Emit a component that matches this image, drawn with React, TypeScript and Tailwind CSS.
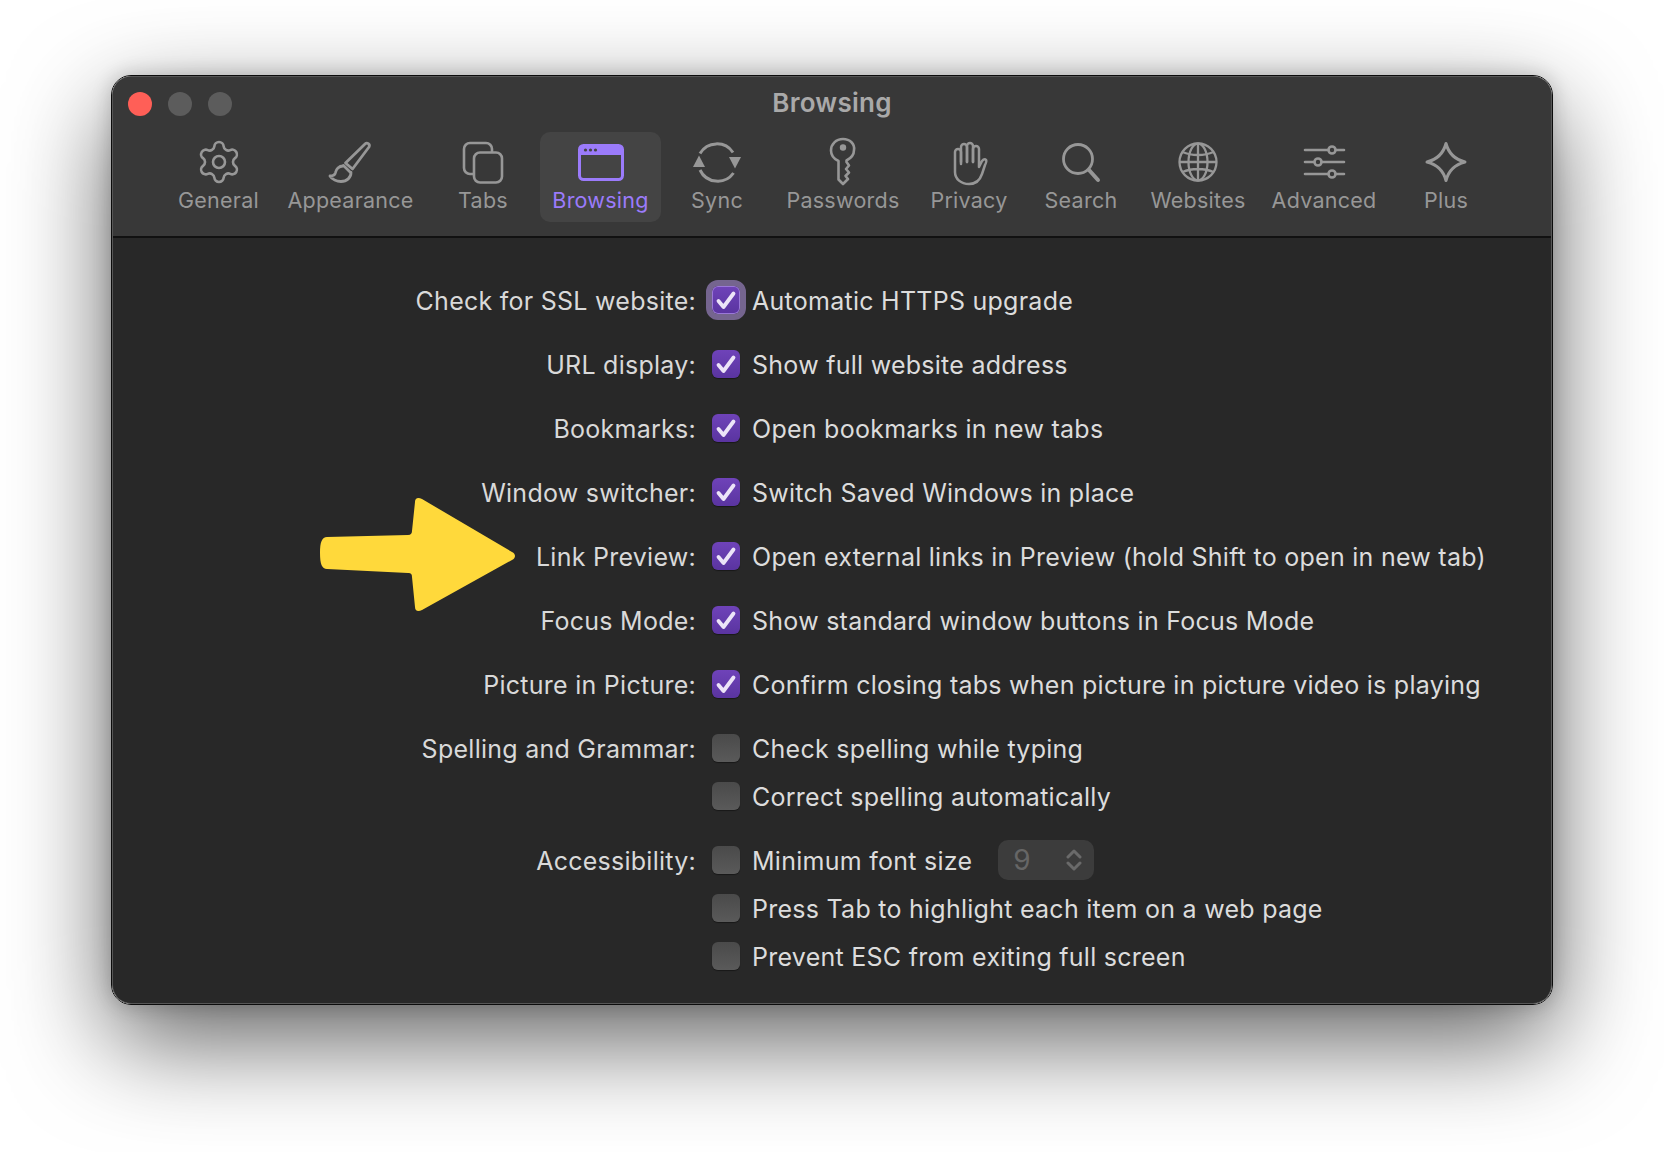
import React from 'react';
import { Settings } from 'lucide-react';

const GearIcon = () => <Settings size={50} strokeWidth={1.3} />;

const BrushIcon = () => (
  <svg width="48" height="48" viewBox="0 0 48 48" fill="none" stroke="currentColor" strokeWidth="2.800" strokeLinejoin="round" strokeLinecap="round">
    <path d="M18.500 25L38 6c2-2 5.500 0 4 3L25.500 31z" />
    <path d="M16.500 27.500L23 34" />
    <path d="M16 28c-4 0-7 3-7.500 6.500-.5 2.500-2.500 3.500-5.500 3.500 2 3.500 7 5.500 11 5.500 6 0 10-4 10-9" />
  </svg>
);

const TabsIcon = () => (
  <svg width="48" height="48" viewBox="0 0 48 48" fill="none" stroke="currentColor" strokeWidth="2.600">
    <path d="M14 36h-3a6 6 0 0 1-6-6V11a6 6 0 0 1 6-6h16a6 6 0 0 1 6 6v3" />
    <rect x="15" y="14.500" width="28" height="30" rx="6" />
  </svg>
);

const BrowsingIcon = () => (
  <svg width="48" height="48" viewBox="0 0 48 48" fill="none">
    <rect x="2.500" y="7.500" width="43" height="34" rx="4" stroke="currentColor" strokeWidth="3" />
    <path d="M2.500 17V11a4 4 0 0 1 4-4h35a4 4 0 0 1 4 4v6z" fill="currentColor" />
    <circle cx="8.500" cy="12" r="1.600" fill="#444" />
    <circle cx="13.500" cy="12" r="1.600" fill="#444" />
    <circle cx="18.500" cy="12" r="1.600" fill="#444" />
  </svg>
);

const SyncIcon = () => (
  <svg width="48" height="48" viewBox="0 0 48 48" fill="none" stroke="currentColor" strokeWidth="3">
    <path d="M7 15.500A19.500 19.500 0 0 1 40 14.500" />
    <path d="M7 32A19.500 19.500 0 0 0 40.500 35" />
    <path d="M0 29H12L6 17.500z" fill="currentColor" stroke="none" />
    <path d="M36 19H48L42 30.500z" fill="currentColor" stroke="none" />
  </svg>
);

const KeyIcon = () => (
  <svg width="48" height="50" viewBox="0 0 48 50" fill="none" stroke="currentColor" strokeWidth="2.600" strokeLinejoin="round">
    <path d="M24 2C17 2 12 7 12 13.500c0 4.500 3 8.500 7.500 10.500V42.500l4.500 4.500 5-5-2.500-3 3.500-3.500-3-3.500 3-3.500-2.500-3.500v-1.500c4-2 7.500-6 7.500-10.500C36 7 31 2 24 2Z" />
    <circle cx="24" cy="10.500" r="3.200" fill="currentColor" stroke="none" />
  </svg>
);

const HandIcon = () => (
  <svg width="48" height="48" viewBox="0 0 48 48" fill="none" stroke="currentColor" strokeWidth="2.500" strokeLinecap="round" strokeLinejoin="round">
    <path d="M16 26V14a3 3 0 0 0-6 0v20c0 7 6 12 14 12 7 0 11-4 13-10l3-9c1-2 2-4 1-5-1-2-4 0-5 3l-2 4V11a3 3 0 0 0-6 0v13" />
    <path d="M16 24V9a3 3 0 0 1 6 0v15" />
    <path d="M22 24V8a3 3 0 0 1 6 0v16" />
  </svg>
);

const SearchIcon = () => (
  <svg width="48" height="48" viewBox="0 0 48 48" fill="none" stroke="currentColor" strokeLinecap="round">
    <circle cx="21" cy="21" r="14.500" strokeWidth="2.800" />
    <path d="M32 32l9 10" strokeWidth="4" />
  </svg>
);

const GlobeIcon = () => (
  <svg width="48" height="48" viewBox="0 0 48 48" fill="none" stroke="currentColor" strokeWidth="2.300">
    <circle cx="24" cy="24" r="18.500" />
    <ellipse cx="24" cy="24" rx="9.500" ry="18.500" />
    <path d="M24 5.500v37M5.500 24h37M8.500 14c9 4 22 4 31 0M8.500 34c9-4 22-4 31 0" />
  </svg>
);

const SlidersIcon = () => (
  <svg width="48" height="48" viewBox="0 0 48 48" fill="none" stroke="currentColor" strokeWidth="2.600" strokeLinecap="round">
    <path d="M5 12h39M5 24h39M5 36h39" />
    <circle cx="32" cy="12" r="3.500" fill="#383838" />
    <circle cx="18" cy="24" r="3.500" fill="#383838" />
    <circle cx="32" cy="36" r="3.500" fill="#383838" />
  </svg>
);

const StarIcon = () => (
  <svg width="48" height="48" viewBox="0 0 48 48" fill="none" stroke="currentColor" strokeWidth="3" strokeLinejoin="round">
    <path d="M24 5.500c2.500 9.500 9 16 19 18.500-10 2.500-16.500 9-19 18.500-2.500-9.500-9-16-19-18.500 10-2.500 16.500-9 19-18.500z" />
  </svg>
);

const tabs = [
  { name: 'General', width: 'w-[113px]', icon: <GearIcon /> },
  { name: 'Appearance', width: 'w-[151px]', icon: <BrushIcon /> },
  { name: 'Tabs', width: 'w-[114px]', icon: <TabsIcon /> },
  { name: 'Browsing', width: 'w-[121px]', icon: <BrowsingIcon />, active: true },
  { name: 'Sync', width: 'w-[112px]', icon: <SyncIcon /> },
  { name: 'Passwords', width: 'w-[140px]', icon: <KeyIcon /> },
  { name: 'Privacy', width: 'w-[112px]', icon: <HandIcon /> },
  { name: 'Search', width: 'w-[112px]', icon: <SearchIcon /> },
  { name: 'Websites', width: 'w-[122px]', icon: <GlobeIcon /> },
  { name: 'Advanced', width: 'w-[130px]', icon: <SlidersIcon /> },
  { name: 'Plus', width: 'w-[114px]', icon: <StarIcon /> },
];

const rows: { label?: string; text: string; checked?: boolean; focus?: boolean; spinner?: boolean; tight?: boolean }[] = [
  { label: 'Check for SSL website:', text: 'Automatic HTTPS upgrade', checked: true, focus: true },
  { label: 'URL display:', text: 'Show full website address', checked: true },
  { label: 'Bookmarks:', text: 'Open bookmarks in new tabs', checked: true },
  { label: 'Window switcher:', text: 'Switch Saved Windows in place', checked: true },
  { label: 'Link Preview:', text: 'Open external links in Preview (hold Shift to open in new tab)', checked: true },
  { label: 'Focus Mode:', text: 'Show standard window buttons in Focus Mode', checked: true },
  { label: 'Picture in Picture:', text: 'Confirm closing tabs when picture in picture video is playing', checked: true },
  { label: 'Spelling and Grammar:', text: 'Check spelling while typing' },
  { text: 'Correct spelling automatically', tight: true },
  { label: 'Accessibility:', text: 'Minimum font size', spinner: true },
  { text: 'Press Tab to highlight each item on a web page', tight: true },
  { text: 'Prevent ESC from exiting full screen', tight: true },
];

const Checkbox = ({ checked, focus }: { checked?: boolean; focus?: boolean }) => (
  <div
    className={`mb-[4px] flex h-[28px] w-[28px] shrink-0 items-center justify-center rounded-[6px] ${
      checked
        ? 'bg-gradient-to-b from-[#6f43b9] to-[#5a34a0] shadow-[0_1px_1px_rgba(0,0,0,0.4)]'
        : 'bg-gradient-to-b from-[#4a4a4a] to-[#5a5a5a] shadow-[0_1px_1px_rgba(0,0,0,0.4)]'
    } ${focus ? 'outline-[6px] outline-[#75658f] ring-1 ring-inset ring-[#9a78d8]' : ''}`}
  >
    {checked && (
      <svg width="28" height="28" viewBox="0 0 28 28" fill="none" stroke="#ece4f8" strokeWidth="3.800" strokeLinecap="round" strokeLinejoin="round">
        <path d="M6.500 15l5 6L21.500 7.500" />
      </svg>
    )}
  </div>
);

const App = () => (
  <div className="relative h-[1152px] w-[1664px] overflow-hidden bg-white pl-[111px] pt-[75px] font-['Inter',sans-serif]">
    <div className="h-[930px] w-[1442px] rounded-[20px] border border-[#0c0c0c] shadow-[0_36px_100px_rgba(0,0,0,0.62),0_0_20px_rgba(0,0,0,0.2)]">
      <div className="h-full overflow-hidden rounded-[19px] border border-[#565656] bg-[#282828]">
        <div className="h-[161px] border-b-2 border-[#111] bg-[#383838]">
          <div className="relative flex h-[55px] items-center justify-center pb-[4px]">
            <div className="absolute left-[15px] top-[15px] flex gap-[16px]">
              <div className="h-[24px] w-[24px] rounded-full bg-[#ff5f57]" />
              <div className="h-[24px] w-[24px] rounded-full bg-[#5c5c5c]" />
              <div className="h-[24px] w-[24px] rounded-full bg-[#5c5c5c]" />
            </div>
            <span className="text-[26px] font-semibold tracking-[0.25px] text-[#a9a9a9]">Browsing</span>
          </div>
          <div className="flex pl-[49px]">
            {tabs.map(tab => (
              <div
                key={tab.name}
                className={`${tab.width} flex h-[90px] flex-col items-center rounded-[10px] pt-[6px] ${
                  tab.active ? 'bg-[#444444] text-[#9b7bfb]' : 'text-[#979797]'
                }`}
              >
                <div className="flex h-[48px] w-[48px] items-center justify-center">{tab.icon}</div>
                <span className="text-[21.5px] leading-[28px] tracking-[0.25px]">{tab.name}</span>
              </div>
            ))}
          </div>
        </div>
        <div className="flex flex-col pt-[40px]">
          {rows.map(row => (
            <div key={row.text} className={`flex h-[48px] items-center ${row.tight || row === rows[0] ? '' : 'mt-[16px]'}`}>
              <div className="w-[583px] shrink-0 text-right text-[25px] tracking-[0.26px] text-[#d9d9d9]">{row.label}</div>
              <div className="ml-[16px]">
                <Checkbox checked={row.checked} focus={row.focus} />
              </div>
              <span className="ml-[12px] text-[25px] tracking-[0.26px] text-[#dcdcdc]">{row.text}</span>
              {row.spinner && (
                <div className="mb-[5px] ml-[26px] flex h-[40px] w-[96px] items-center justify-between rounded-[10px] bg-[#3c3c3c] pl-[15px] pr-[12px] text-[28px] text-[#666]">
                  9
                  <svg width="16" height="24" viewBox="0 0 16 24" fill="none" stroke="#6a6a6a" strokeWidth="3" strokeLinecap="round" strokeLinejoin="round">
                    <path d="M2 9l6-6 6 6M2 15l6 6 6-6" />
                  </svg>
                </div>
              )}
            </div>
          ))}
        </div>
      </div>
    </div>
    <svg className="absolute left-[318px] top-[495px]" width="200" height="120" viewBox="318 495 200 120">
      <path
        d="M327 537L408 535C411 535 412 533 412 531L415 502C415 498 418 497 422 499L512 552C516 554 516 558 512 560L422 610C418 612 415 611 415 607L412 577C412 574 411 573 408 573L327 569C322 569 320 564 320 553C320 542 322 537 327 537Z"
        fill="#ffd93b"
      />
    </svg>
  </div>
);

export default App;
